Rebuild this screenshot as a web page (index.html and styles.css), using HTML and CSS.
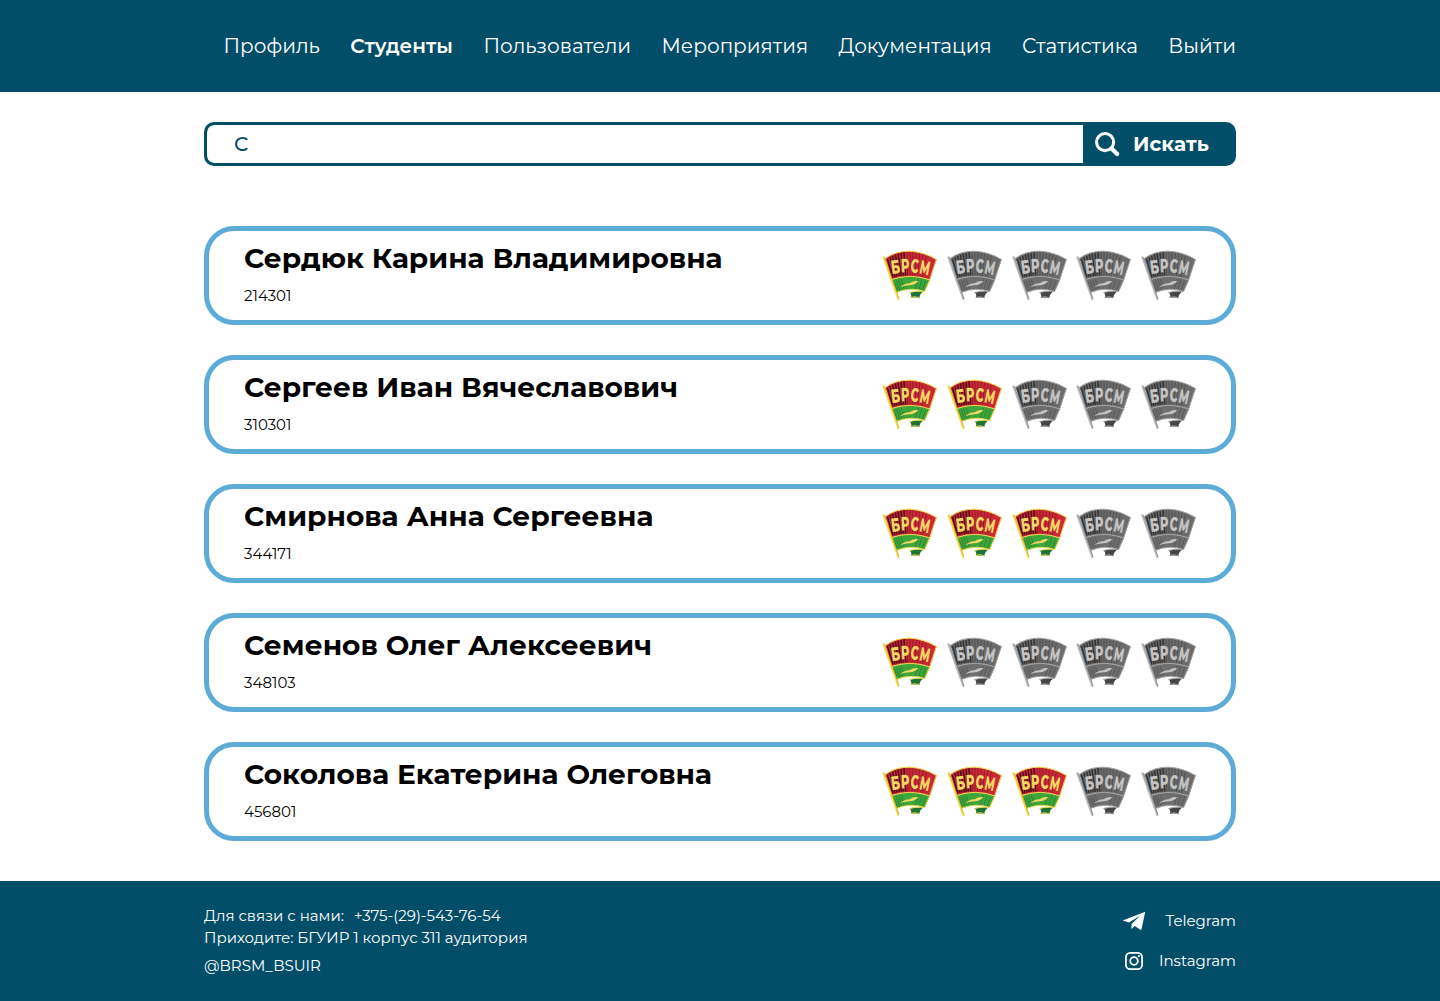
FILE: index.html
```html
<!DOCTYPE html>
<html lang="ru">
<head>
<meta charset="utf-8">
<title>Студенты</title>
<link rel="stylesheet" href="styles.css">
</head>
<body>
<svg class="sprite" aria-hidden="true">
  <symbol id="badge" viewBox="24 31 165 152">
    <path class="b-fold" d="M107 158L152 152Q136 162 136 175Q124 171 110 174Q115 166 107 158Z"/>
    <path class="b-lower" d="M50 121Q108 99 168 121L152 155Q110 140 67 158Z"/>
    <path class="b-upper" d="M34 56Q62 34 106 34Q150 36 188 59Q178 88 168 120Q108 100 51 119Q44 80 34 56Z"/>
    <path class="b-stripes" d="M40 57L57 113M48 52L63 111M56 48L69 110M64 44L76 109M72 41L82 108M81 39L88 107M90 37L95 107"/>
    <path class="b-stripes soft" d="M99 36L101 107M108 36L108 107M117 37L115 107M127 39L123 107M137 41L130 109M147 44L138 110M157 48L145 112"/>
    <path class="b-shade" d="M60 125L70 153M67 122L77 151M74 120L83 148M82 118L90 146M133 117L124 148M144 119L134 149M155 122L145 152"/>
    <path class="b-line" d="M34 56Q62 34 106 34Q150 36 187 59Q177 88 167 120L152 155Q110 140 67 158M50 120Q108 99 167 120M106 158Q124 151 150 155M110 173Q124 168 136 174"/>
    <path class="b-gold" d="M78 142Q94 129 107 130Q120 121 133 124Q123 135 107 136Q94 136 78 142Z"/>
    <path class="b-pole" d="M28 52L73 178"/>
    <path class="b-pole-shade" d="M31 52L75 177"/>
    <g class="b-text">
      <text transform="translate(54 103) rotate(-8) scale(.62 1)">Б</text>
      <text transform="translate(82 98) rotate(-3) scale(.6 1)">Р</text>
      <text transform="translate(109 97) rotate(5) scale(.56 1)">С</text>
      <text transform="translate(134 100) rotate(11) scale(.54 1)">М</text>
    </g>
  </symbol>
</svg>

<header class="header">
  <nav class="nav">
    <a>Профиль</a>
    <a class="active">Студенты</a>
    <a>Пользователи</a>
    <a>Мероприятия</a>
    <a>Документация</a>
    <a>Статистика</a>
    <a>Выйти</a>
  </nav>
</header>

<main class="main">
  <form class="search">
    <div class="search-field">С</div>
    <div class="search-button">
      <svg class="search-icon" viewBox="0 0 26 26"><circle cx="10.5" cy="10.5" r="8.9"/><path d="M17.2 17.2L23 23"/></svg>
      <span>Искать</span>
    </div>
  </form>

  <section class="list">
    <article class="card">
      <div><h2>Сердюк Карина Владимировна</h2><p>214301</p></div>
      <div class="badges">
        <svg class="on"><use href="#badge"/></svg><svg><use href="#badge"/></svg><svg><use href="#badge"/></svg><svg><use href="#badge"/></svg><svg><use href="#badge"/></svg>
      </div>
    </article>
    <article class="card">
      <div><h2>Сергеев Иван Вячеславович</h2><p>310301</p></div>
      <div class="badges">
        <svg class="on"><use href="#badge"/></svg><svg class="on"><use href="#badge"/></svg><svg><use href="#badge"/></svg><svg><use href="#badge"/></svg><svg><use href="#badge"/></svg>
      </div>
    </article>
    <article class="card">
      <div><h2>Смирнова Анна Сергеевна</h2><p>344171</p></div>
      <div class="badges">
        <svg class="on"><use href="#badge"/></svg><svg class="on"><use href="#badge"/></svg><svg class="on"><use href="#badge"/></svg><svg><use href="#badge"/></svg><svg><use href="#badge"/></svg>
      </div>
    </article>
    <article class="card">
      <div><h2>Семенов Олег Алексеевич</h2><p>348103</p></div>
      <div class="badges">
        <svg class="on"><use href="#badge"/></svg><svg><use href="#badge"/></svg><svg><use href="#badge"/></svg><svg><use href="#badge"/></svg><svg><use href="#badge"/></svg>
      </div>
    </article>
    <article class="card">
      <div><h2>Соколова Екатерина Олеговна</h2><p>456801</p></div>
      <div class="badges">
        <svg class="on"><use href="#badge"/></svg><svg class="on"><use href="#badge"/></svg><svg class="on"><use href="#badge"/></svg><svg><use href="#badge"/></svg><svg><use href="#badge"/></svg>
      </div>
    </article>
  </section>
</main>

<footer class="footer">
  <div class="footer-inner">
    <div class="contacts">
      <p><span>Для связи с нами:</span><span>+375-(29)-543-76-54</span></p>
      <p>Приходите: БГУИР 1 корпус 311 аудитория</p>
      <p class="handle">@BRSM_BSUIR</p>
    </div>
    <div class="social">
      <a>
        <svg class="telegram" viewBox="0 0 24 20"><path d="M23.2.3L.3 9.1Q-.2 9.5.4 9.7L6.2 11.5L17.8 4.6L9 13L8.7 18.4L12.2 15.2L18.1 19.2Q19 19.6 19.3 18.6Z"/></svg>
        <span>Telegram</span>
      </a>
      <a>
        <svg class="instagram" viewBox="0 0 18 18"><rect x=".9" y=".9" width="16.2" height="16.2" rx="4.4"/><circle cx="9" cy="9" r="3.8"/><circle class="dot" cx="13.8" cy="4.2" r="1.1"/></svg>
        <span>Instagram</span>
      </a>
    </div>
  </div>
</footer>
</body>
</html>
```
FILE: styles.css
```css
* { box-sizing: border-box; }
body { margin: 0; font-family: Montserrat, Inter, sans-serif; color: #000; background: #fff; }
h2, p { margin: 0; }
.sprite { display: none; }

.header { height: 92px; background: #024e68; display: flex; justify-content: center; align-items: center; }
.nav { width: 1032px; display: flex; justify-content: flex-end; gap: 30.5px; font-size: 20px; line-height: 24px; font-weight: 400; color: #fff; }
.nav .active { font-weight: 600; }

.main { width: 1032px; margin: 0 auto; padding: 30px 0 40px; }
.search { height: 44px; display: flex; border: 3px solid #024e68; border-radius: 10px; background: #024e68; overflow: hidden; }
.search-field { width: 876px; padding-left: 27px; background: #fff; border-radius: 7px 0 0 7px; color: #024e68; font-size: 20px; line-height: 38px; font-weight: 500; }
.search-button { flex: 1; display: flex; align-items: center; padding-left: 12px; gap: 13px; color: #fff; font-size: 20px; font-weight: 700; }
.search-icon { width: 25px; height: 25px; margin-top: 1px; fill: none; stroke: #fff; stroke-width: 3.2; stroke-linecap: round; }
.search-icon path { stroke-width: 4.4; }

.list { margin-top: 60px; display: flex; flex-direction: column; gap: 30px; }
.card { height: 99px; border: 5px solid #5dabd7; border-radius: 30px; padding: 10px 35px 0; display: flex; justify-content: space-between; }
.card h2 { font-size: 28px; line-height: 34px; font-weight: 700; }
.card p { margin-top: 12px; font-size: 15px; line-height: 18px; }

.badges { width: 314px; padding-top: 9px; display: flex; justify-content: space-between; }
.badges svg {
  width: 55px; height: 51px;
  --upper: #6b6b6b; --lower: #6e6e6e; --fold: #454545; --stripe: #343434; --line: #a2a2a2; --gold: #c4c4c4; --pole: #b9b9b9; --pole-shade: #777; --shade: #5a5a5a;
}
.badges .on {
  --upper: #cb2836; --lower: #3da53a; --fold: #1d7433; --stripe: #4f0d18; --line: #f0d84b; --gold: #f3d765; --pole: #f5df4d; --pole-shade: #c99a2c; --shade: #2a8734;
}
.b-upper { fill: var(--upper); }
.b-lower { fill: var(--lower); }
.b-fold { fill: var(--fold); }
.b-stripes { stroke: var(--stripe); stroke-width: 4.5; fill: none; }
.b-stripes.soft { stroke-width: 3; opacity: .45; }
.b-shade { stroke: var(--shade); stroke-width: 3; fill: none; }
.b-line { stroke: var(--line); stroke-width: 3; fill: none; }
.b-gold { fill: var(--gold); }
.b-pole { stroke: var(--pole); stroke-width: 6; stroke-linecap: round; }
.b-pole-shade { stroke: var(--pole-shade); stroke-width: 2; }
.b-text { fill: var(--gold); font: 800 58px Montserrat, Inter, sans-serif; }

.footer { height: 120px; background: #024e68; color: #fff; font-size: 15px; line-height: 18px; }
.footer-inner { width: 1032px; margin: 0 auto; display: flex; justify-content: space-between; }
.contacts { padding-top: 26px; display: flex; flex-direction: column; gap: 4px; }
.contacts p:first-child { display: flex; gap: 10px; }
.contacts .handle { margin-top: 6px; }
.social { padding-top: 31px; display: flex; flex-direction: column; gap: 22px; }
.social a { height: 18px; display: flex; justify-content: flex-end; align-items: center; }
.telegram { width: 23px; height: 20px; margin-right: 20px; fill: #fff; }
.instagram { width: 18px; height: 18px; margin-right: 16px; fill: none; stroke: #fff; stroke-width: 1.8; }
.instagram .dot { fill: #fff; stroke: none; }
```
